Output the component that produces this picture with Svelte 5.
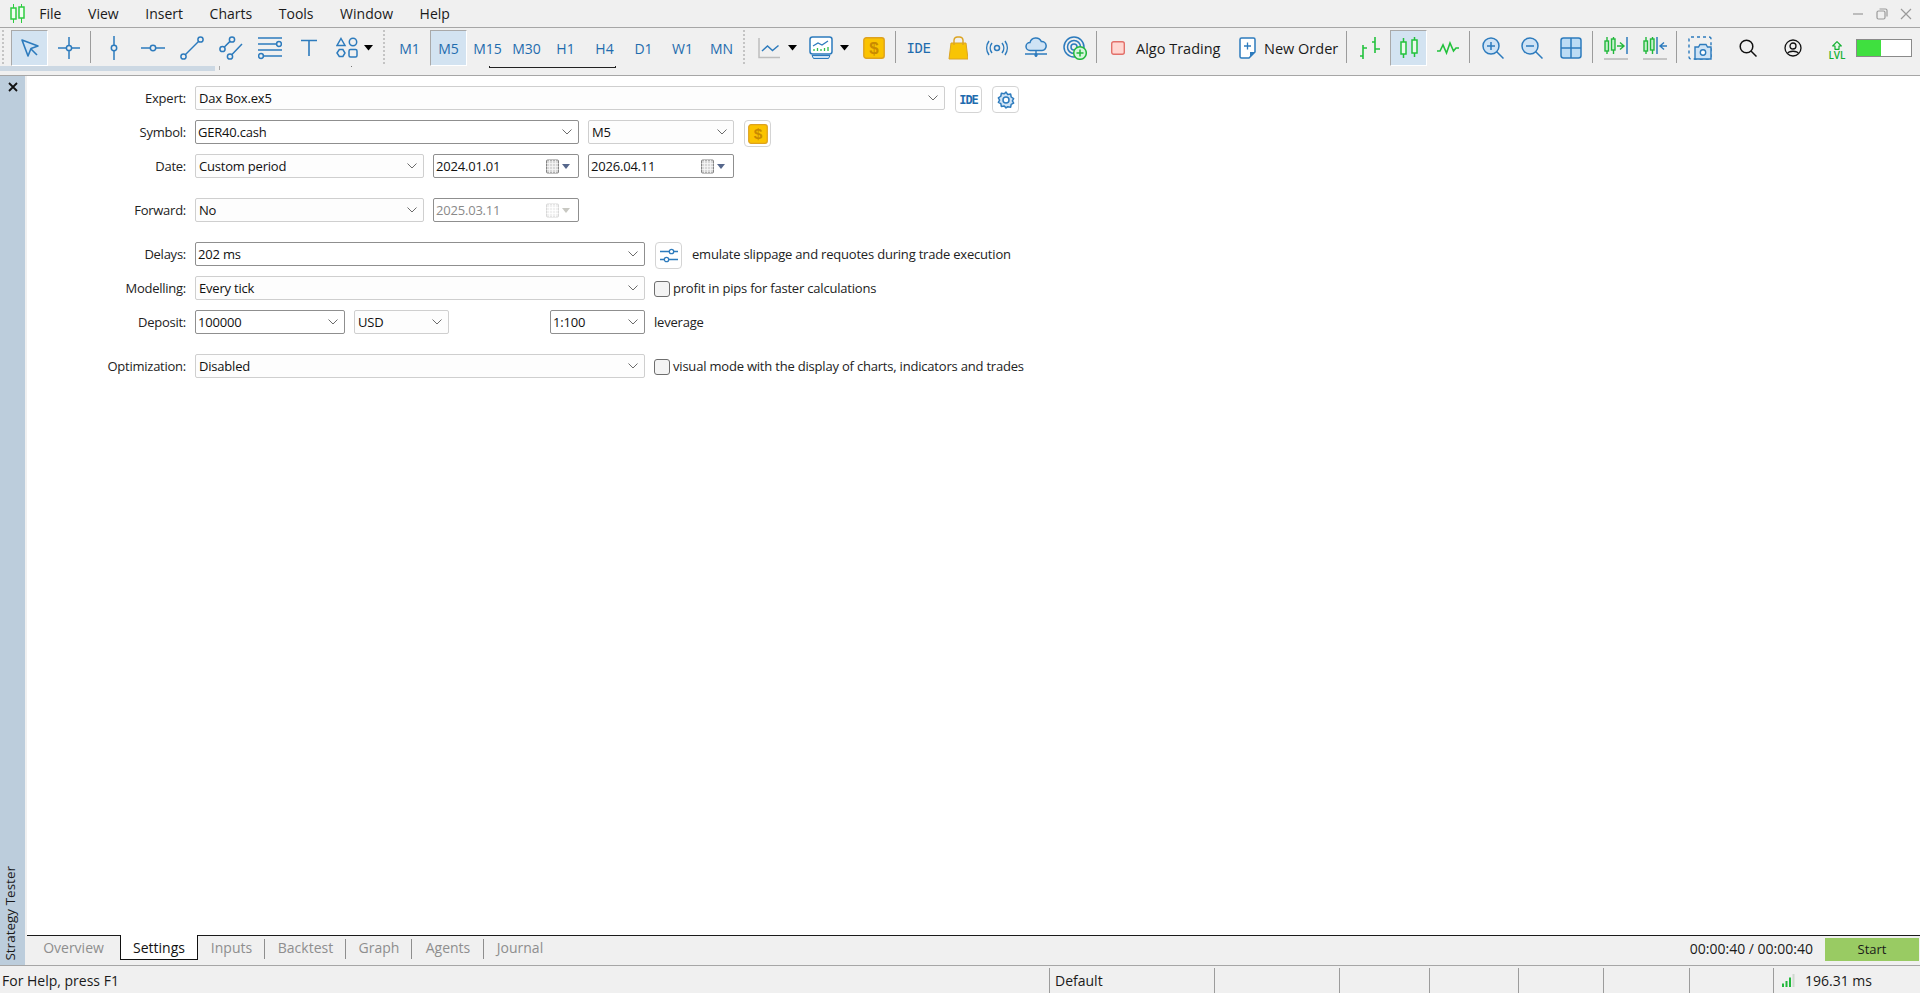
<script>
  const menus = ['File', 'View', 'Insert', 'Charts', 'Tools', 'Window', 'Help'];
  const periods = ['M1', 'M5', 'M15', 'M30', 'H1', 'H4', 'D1', 'W1', 'MN'];
  const tabs = [
    { name: 'Inputs', w: 67 },
    { name: 'Backtest', w: 81 },
    { name: 'Graph', w: 66 },
    { name: 'Agents', w: 72 },
    { name: 'Journal', w: 72 }
  ];
  const statusCells = [165, 125, 90, 89, 85, 86, 84];
</script>

{#snippet chevron()}
  <svg class="chev" width="12" height="8" viewBox="0 0 12 8"><path d="M1.5 1.5 6 6l4.5-4.5" fill="none" stroke="#6b6b6b" stroke-width="1"/></svg>
{/snippet}

{#snippet select(cls, text, strong)}
  <div class="sel {cls}" class:strong={strong}><span>{text}</span>{@render chevron()}</div>
{/snippet}

{#snippet calendar(off)}
  <svg class="cal" width="30" height="17" viewBox="0 0 30 17">
    <rect x="1.5" y="2" width="12" height="13" rx="1" fill={off ? '#f0f0f0' : '#d8d8d8'} stroke={off ? '#d8d8d8' : '#858585'}/>
    <path d="M4.5 2v13M7.5 2v13M10.5 2v13M1.5 5.5h12M1.5 8.5h12M1.5 11.5h12" stroke={off ? '#fff' : '#f8f8f8'} stroke-width=".8"/>
    <path d="M17 6h8l-4 5z" fill={off ? '#c8c8c2' : '#56678c'}/>
  </svg>
{/snippet}

{#snippet caret()}
  <svg class="caret" width="10" height="6" viewBox="0 0 10 6"><path d="M0 0h9L4.5 5.5z" fill="#000"/></svg>
{/snippet}

{#snippet dollar(size)}
  <svg width={size} height={size} viewBox="0 0 22 22">
    <rect x=".8" y=".8" width="20.400" height="20.400" rx="2.500" fill="#fbc300" stroke="#dea21e" stroke-width="1.400"/>
    <text x="11" y="17" text-anchor="middle" class="dollar">$</text>
  </svg>
{/snippet}

<div class="app">
  <header class="menubar">
    <svg class="logo" width="15" height="19" viewBox="0 0 15 19">
      <path d="M3.500 0v19M11.500 0v19" stroke="#2ecc40" stroke-width="1"/>
      <rect x="1" y="4" width="5" height="11" fill="#f0fff0" stroke="#2ecc40" stroke-width="1.500"/>
      <rect x="9" y="3" width="5" height="11" fill="#f0fff0" stroke="#2ecc40" stroke-width="1.500"/>
    </svg>
    <nav class="menus">
      {#each menus as m}<span>{m}</span>{/each}
    </nav>
    <div class="winctl">
      <svg width="12" height="12" viewBox="0 0 12 12"><path d="M1 6h10" stroke="#9a9a9a" stroke-width="1.2"/></svg>
      <svg width="12" height="12" viewBox="0 0 12 12"><rect x="1" y="3" width="8" height="8" rx="1.5" fill="none" stroke="#9a9a9a" stroke-width="1.2"/><path d="M3.5 1h6a1.5 1.5 0 0 1 1.5 1.5v6" fill="none" stroke="#9a9a9a" stroke-width="1.2"/></svg>
      <svg width="12" height="12" viewBox="0 0 12 12"><path d="M1 1l10 10M11 1 1 11" stroke="#9a9a9a" stroke-width="1.2"/></svg>
    </div>
  </header>

  <div class="toolbar">
    <div class="grip first"></div>
    <div class="tb on">
      <svg width="20" height="20" viewBox="0 0 20 20"><path d="M2 2l16 6-7 2.5L8 18z" fill="#cfe3f5" stroke="#2d7bbd" stroke-width="1.6" stroke-linejoin="round"/><path d="M11 11l6 6" stroke="#2d7bbd" stroke-width="1.6"/></svg>
    </div>
    <div class="tb">
      <svg width="22" height="22" viewBox="0 0 22 22"><g fill="none" stroke="#2d7bbd" stroke-width="1.5"><path d="M0 11h8M14 11h8M11 0v8M11 14v8"/><circle cx="11" cy="11" r="2.6"/></g></svg>
    </div>
    <div class="sep"></div>
    <div class="tb">
      <svg width="8" height="24" viewBox="0 0 8 24"><g fill="none" stroke="#2d7bbd" stroke-width="1.5"><path d="M4 0v9M4 15v9"/><circle cx="4" cy="12" r="2.7"/></g></svg>
    </div>
    <div class="tb">
      <svg width="24" height="8" viewBox="0 0 24 8"><g fill="none" stroke="#2d7bbd" stroke-width="1.5"><path d="M0 4h9M15 4h9"/><circle cx="12" cy="4" r="2.7"/></g></svg>
    </div>
    <div class="tb">
      <svg width="24" height="24" viewBox="0 0 24 24"><g fill="none" stroke="#2d7bbd" stroke-width="1.5"><circle cx="3.5" cy="20.5" r="2.6"/><circle cx="20.5" cy="3.5" r="2.6"/><path d="M5.5 18.5l13-13"/></g></svg>
    </div>
    <div class="tb">
      <svg width="24" height="24" viewBox="0 0 24 24"><g fill="none" stroke="#2d7bbd" stroke-width="1.5"><circle cx="3.5" cy="13" r="2.6"/><circle cx="13" cy="3.5" r="2.6"/><circle cx="11" cy="20.5" r="2.6"/><path d="M5.4 11 11 5.4M13 18.5 23 8"/></g></svg>
    </div>
    <div class="tb">
      <svg width="24" height="24" viewBox="0 0 24 24"><g fill="none" stroke="#2d7bbd" stroke-width="1.5"><path d="M0 2h24M0 8h18M0 14h24M6 20h18"/><circle cx="21" cy="8" r="2.4" fill="#f0f0f0"/><circle cx="3" cy="20" r="2.4"/></g></svg>
    </div>
    <div class="tb">
      <svg width="18" height="18" viewBox="0 0 18 18"><path d="M1 1.5h16M9 1.5V17" fill="none" stroke="#2d7bbd" stroke-width="1.6"/></svg>
    </div>
    <div class="tb wide53">
      <svg class="shapes" width="22" height="22" viewBox="0 0 22 22"><g fill="none" stroke="#2d7bbd" stroke-width="1.5"><path d="M5 1.5l4 7H1z"/><circle cx="17" cy="5" r="3.7"/><path d="M1 16l2.3-3.5h3.6L9 16l-2.1 3.5H3.3z"/><rect x="13" y="12.5" width="8" height="7.5" rx="1.5"/></g></svg>
      {@render caret()}
    </div>
    <div class="grip"></div>
    {#each periods as p}
      <div class="tb period" class:on={p === 'M5'}><span>{p}</span></div>
    {/each}
    <div class="grip g2"></div>
    <div class="tb wide52">
      <svg width="22" height="22" viewBox="0 0 22 22"><path d="M1 1v19.5h21" fill="none" stroke="#bdbdbd" stroke-width="1.5"/><path d="M4 14l5.5-5 5 4.5 6-5" fill="none" stroke="#2d7bbd" stroke-width="1.5"/></svg>
      {@render caret()}
    </div>
    <div class="tb wide53b">
      <svg width="24" height="24" viewBox="0 0 24 24"><rect x="1" y="1" width="22" height="17" rx="2.5" fill="#fff" stroke="#2d7bbd" stroke-width="1.5"/><path d="M4 10l5-3 4 2 6-4" fill="none" stroke="#2d7bbd" stroke-width="1.3"/><path d="M5 15v-2M8.5 15v-3M12 15v-2M15.5 15v-3M19 15v-4" stroke="#2fbf4a" stroke-width="1.3"/><path d="M3 19.5l1.5 3h15l1.5-3z" fill="#cfe3f5" stroke="#2d7bbd"/></svg>
      {@render caret()}
    </div>
    <div class="tb">{@render dollar(22)}</div>
    <div class="sep"></div>
    <div class="tb ide">IDE</div>
    <div class="tb">
      <svg width="20" height="24" viewBox="0 0 20 24"><path d="M3 7h15l2 16H1z" fill="#f8c404" stroke="#dca422"/><path d="M6 9V4a3.5 3.5 0 0 1 3.5-3h2A3.5 3.5 0 0 1 15 4v5" fill="none" stroke="#dca422" stroke-width="1.4"/></svg>
    </div>
    <div class="tb">
      <svg width="22" height="16" viewBox="0 0 22 16"><g fill="none" stroke="#2d7bbd" stroke-width="1.5"><circle cx="11" cy="8" r="2.5"/><path d="M6 3a8 8 0 0 0 0 10M16 3a8 8 0 0 1 0 10M3 1a12 12 0 0 0 0 14M19 1a12 12 0 0 1 0 14"/></g></svg>
    </div>
    <div class="tb">
      <svg width="22" height="22" viewBox="0 0 22 22"><path d="M5 13.5a4 4 0 0 1 0-8 6 6 0 0 1 11.3-1A4.5 4.5 0 0 1 17 13.5z" fill="#cfe3f5" stroke="#2d7bbd" stroke-width="1.5"/><path d="M0 17h22M11 14v6" stroke="#2d7bbd" stroke-width="1.4"/><circle cx="11" cy="18" r="1.7" fill="#2d7bbd"/></svg>
    </div>
    <div class="tb">
      <svg width="24" height="24" viewBox="0 0 24 24"><g fill="none" stroke="#2d7bbd" stroke-width="1.5"><circle cx="11" cy="11" r="10"/><circle cx="11" cy="11" r="6.5"/><circle cx="11" cy="11" r="3"/></g><circle cx="17" cy="17" r="6.3" fill="#d8f5dd" stroke="#22b83c" stroke-width="1.5"/><path d="M13.5 17h7M17 13.5v7" stroke="#22b83c" stroke-width="1.5"/></svg>
    </div>
    <div class="sep"></div>
    <div class="tb textbtn algo">
      <svg width="14" height="14" viewBox="0 0 14 14"><rect x=".7" y=".7" width="12.6" height="12.6" rx="2" fill="#ffd7d2" stroke="#e2706a" stroke-width="1.4"/></svg>
      <span>Algo Trading</span>
    </div>
    <div class="tb textbtn order">
      <svg width="17" height="22" viewBox="0 0 17 22"><path d="M2.5 1h12A1.5 1.5 0 0 1 16 2.500V15l-6 6H2.500A1.500 1.500 0 0 1 1 19.500v-17A1.500 1.500 0 0 1 2.500 1z" fill="#fff" stroke="#2d7bbd" stroke-width="1.5"/><path d="M16 15h-5v5z" fill="#2d7bbd"/><path d="M5 9h7M8.500 5.500v7" stroke="#2d7bbd" stroke-width="1.3"/></svg>
      <span>New Order</span>
    </div>
    <div class="sep"></div>
    <div class="tb">
      <svg width="22" height="22" viewBox="0 0 22 22"><path d="M4 8v14M4 11h4M1 19h3M16 0v16M16 5h-3M16 12h5" fill="none" stroke="#22c23c" stroke-width="1.6"/></svg>
    </div>
    <div class="tb on">
      <svg width="18" height="22" viewBox="0 0 18 22"><g fill="#eaf9ec" stroke="#22c23c" stroke-width="1.5"><path d="M3.500 1v20M14.500 0v20"/><rect x="1" y="5" width="5" height="12"/><rect x="12" y="3" width="5" height="13"/></g></svg>
    </div>
    <div class="tb">
      <svg width="22" height="14" viewBox="0 0 22 14"><path d="M0 10h3l3-6 3.500 8L13 2l3.500 8 2.500-3h3" fill="none" stroke="#22c23c" stroke-width="1.6"/></svg>
    </div>
    <div class="sep"></div>
    <div class="tb">
      <svg width="22" height="22" viewBox="0 0 22 22"><circle cx="9" cy="9" r="8" fill="#cfe3f5" stroke="#2d7bbd" stroke-width="1.500"/><path d="M14.500 14.500l7 7M5 9h8M9 5v8" stroke="#2d7bbd" stroke-width="1.500"/></svg>
    </div>
    <div class="tb">
      <svg width="22" height="22" viewBox="0 0 22 22"><circle cx="9" cy="9" r="8" fill="#cfe3f5" stroke="#2d7bbd" stroke-width="1.500"/><path d="M14.500 14.500l7 7M5 9h8" stroke="#2d7bbd" stroke-width="1.500"/></svg>
    </div>
    <div class="tb">
      <svg width="22" height="22" viewBox="0 0 22 22"><rect x="1" y="1" width="20" height="20" rx="2.500" fill="#bcdcf5" stroke="#2d7bbd" stroke-width="1.500"/><path d="M11 1v20M1 11h20" stroke="#2d7bbd" stroke-width="1.500"/></svg>
    </div>
    <div class="sep"></div>
    <div class="tb">
      <svg width="24" height="24" viewBox="0 0 24 24"><g fill="#c7efcd" stroke="#22b83c" stroke-width="1.400"><path d="M3 1v17M9.500 1v17"/><rect x="1" y="5" width="3.500" height="10"/><rect x="7.500" y="3" width="3.500" height="11"/></g><path d="M13 10h7M16 6.500l4 3.500-4 3.500" fill="none" stroke="#22b83c" stroke-width="1.400"/><path d="M23 1v17" stroke="#2d7bbd" stroke-width="1.500"/><path d="M0 23h24" stroke="#a8a8a8" stroke-width="1.200"/></svg>
    </div>
    <div class="tb">
      <svg width="24" height="24" viewBox="0 0 24 24"><g fill="#c7efcd" stroke="#22b83c" stroke-width="1.400"><path d="M3 1v17M9.500 1v17"/><rect x="1" y="5" width="3.500" height="10"/><rect x="7.500" y="3" width="3.500" height="11"/></g><path d="M14 1v17" stroke="#2d7bbd" stroke-width="1.500"/><path d="M24 10h-7M21 6.500 17 10l4 3.500" fill="none" stroke="#2d7bbd" stroke-width="1.400"/><path d="M0 23h24" stroke="#a8a8a8" stroke-width="1.200"/></svg>
    </div>
    <div class="sep"></div>
    <div class="tb">
      <svg width="24" height="24" viewBox="0 0 24 24"><rect x="1" y="1" width="22" height="22" rx="2" fill="none" stroke="#2d7bbd" stroke-width="1.400" stroke-dasharray="3 3"/><path d="M8 11h2.500l1.500-2.500h6l1.500 2.500H23v12H7V11z" fill="#cfe3f5" stroke="#2d7bbd" stroke-width="1.400"/><circle cx="15" cy="16.500" r="2.700" fill="#fff" stroke="#2d7bbd" stroke-width="1.400"/></svg>
    </div>
    <div class="tb t45 firstright">
      <svg width="18" height="18" viewBox="0 0 18 18"><circle cx="7.500" cy="7.500" r="6.300" fill="none" stroke="#111" stroke-width="1.500"/><path d="M12 12l5.500 5.500" stroke="#111" stroke-width="1.500"/></svg>
    </div>
    <div class="tb t45">
      <svg width="18" height="18" viewBox="0 0 18 18"><circle cx="9" cy="9" r="8" fill="none" stroke="#111" stroke-width="1.300"/><circle cx="9" cy="7" r="3" fill="none" stroke="#111" stroke-width="1.300"/><path d="M3.500 14.500C5 11.500 13 11.500 14.500 14.500" fill="none" stroke="#111" stroke-width="1.300"/></svg>
    </div>
    <div class="tb lvl">
      <svg width="10" height="9" viewBox="0 0 10 9"><path d="M5 .7 9.300 5H7v3.300H3V5H.7z" fill="#e7f8ea" stroke="#14b032" stroke-width="1.200" stroke-linejoin="round"/></svg>
      <span>LVL</span>
    </div>
    <div class="battery"><div class="fill"></div></div>

    <div class="strip"></div>
    <div class="tick"></div>
    <div class="dot"></div>
    <div class="bracket"></div>
  </div>

  <div class="middle">
    <aside class="side">
      <svg class="close" width="10" height="10" viewBox="0 0 10 10"><path d="M1 1l8 8M9 1 1 9" stroke="#111" stroke-width="1.800"/></svg>
      <span class="vert">Strategy Tester</span>
    </aside>

    <main class="pane">
      <section class="form">
        <div class="row r-expert">
          <label>Expert:</label>
          {@render select('w750 tall', 'Dax Box.ex5')}
          <div class="ibtn first"><span class="ide small">IDE</span></div>
          <div class="ibtn">
            <svg width="18" height="18" viewBox="0 0 24 24"><path d="M12 1.500l2.300 3.200 3.900-.6.700 3.900 3.300 2.200-1.700 3 1.700 3-3.300 1.600-.7 3.800-3.900-.6L12 22.500l-2.300-2.500-3.900.6-.7-3.800L1.800 15.200l1.700-3-1.700-3L5.100 7l.7-3.900 3.900.6z" fill="#cfe3f5" stroke="#2d7bbd" stroke-width="2" stroke-linejoin="round"/><circle cx="12" cy="12" r="4" fill="#fff" stroke="#2d7bbd" stroke-width="2"/></svg>
          </div>
        </div>
        <div class="row r-symbol">
          <label>Symbol:</label>
          {@render select('w384 edit', 'GER40.cash', true)}
          {@render select('w146', 'M5')}
          <div class="ibtn first">{@render dollar(20)}</div>
        </div>
        <div class="row r-date">
          <label>Date:</label>
          {@render select('w229', 'Custom period')}
          <div class="date"><span>2024.01.01</span>{@render calendar(false)}</div>
          <div class="date"><span>2026.04.11</span>{@render calendar(false)}</div>
        </div>
        <div class="row r-forward">
          <label>Forward:</label>
          {@render select('w229', 'No')}
          <div class="date off"><span>2025.03.11</span>{@render calendar(true)}</div>
        </div>
        <div class="row r-delays">
          <label>Delays:</label>
          {@render select('w450 edit', '202 ms', true)}
          <div class="ibtn first">
            <svg width="18" height="16" viewBox="0 0 18 16"><g fill="none" stroke="#2d7bbd" stroke-width="1.300"><path d="M0 3.500h9M14 3.500h4M0 11.500h4M9 11.500h9"/><circle cx="11.500" cy="3.500" r="2.200"/><circle cx="6.500" cy="11.500" r="2.200"/></g></svg>
          </div>
          <span class="note">emulate slippage and requotes during trade execution</span>
        </div>
        <div class="row r-model">
          <label>Modelling:</label>
          {@render select('w450', 'Every tick')}
          <span class="check"></span>
          <span class="note">profit in pips for faster calculations</span>
        </div>
        <div class="row r-deposit">
          <label>Deposit:</label>
          {@render select('w150 edit', '100000', true)}
          {@render select('w95 strong', 'USD')}
          <div class="spacer"></div>
          {@render select('w95 edit', '1:100', true)}
          <span class="note">leverage</span>
        </div>
        <div class="row r-opt">
          <label>Optimization:</label>
          {@render select('w450', 'Disabled')}
          <span class="check"></span>
          <span class="note">visual mode with the display of charts, indicators and trades</span>
        </div>
      </section>

      <div class="tabs">
        <div class="tab overview">Overview</div>
        <div class="tab active">Settings</div>
        {#each tabs as t, i}
          <div class="tab plain" class:divided={i < tabs.length - 1} style="width:{t.w}px">{t.name}</div>
        {/each}
        <div class="timer">00:00:40 / 00:00:40</div>
        <div class="start">Start</div>
      </div>
    </main>
  </div>

  <footer class="status">
    <div class="help">For Help, press F1</div>
    <div class="cell" style="width:165px">Default</div>
    {#each statusCells.slice(1) as w}
      <div class="cell" style="width:{w}px"></div>
    {/each}
    <div class="cell last">
      <svg width="14" height="13" viewBox="0 0 14 13"><path d="M1 9.500h2V13H1zM4.500 7h2v6h-2zM8 3.500h2V13H8z" fill="#22b83c"/><path d="M11.500 0h2v13h-2z" fill="#cfd8cf"/></svg>
      <span>196.31 ms</span>
    </div>
  </footer>
</div>

<style>
  :global(body) { margin: 0; background: #f0f0f0; }
  .app {
    width: 1920px; height: 993px; overflow: hidden;
    display: flex; flex-direction: column;
    font-family: "Open Sans", "Noto Sans", sans-serif; font-size: 13px; color: #111;
    background: #f0f0f0;
  }

  .menubar { height: 27px; display: flex; align-items: center; flex: none; border-bottom: 1px solid #a6a6a6; }
  .logo { margin-left: 10px; }
  .menus { display: flex; margin-left: 1px; font-size: 14px; color: #1a1a1a; }
  .menus span { padding: 0 13.300px; line-height: 27px; }
  .winctl { margin-left: auto; display: flex; gap: 12px; margin-right: 8px; }

  .toolbar {
    height: 47px; flex: none; position: relative;
    display: flex; align-items: flex-start;
    border-bottom: 1px solid #a6a6a6;
  }
  .grip { width: 9px; height: 36px; margin-top: 2px; flex: none; position: relative; }
  .grip::after {
    content: ""; position: absolute; left: 2px; top: 0; width: 2px; height: 34px;
    background: repeating-linear-gradient(#c4c4c4 0 2px, transparent 2px 4px);
  }
  .grip.first { width: 10px; }
  .grip.g2 { width: 8px; }
  .tb {
    width: 39px; height: 36px; margin-top: 2px; flex: none;
    display: flex; align-items: center; justify-content: center; box-sizing: border-box;
    position: relative;
  }
  .tb.on::before {
    content: ""; position: absolute; inset: 0 1px 0 1px;
    background: #d3e3f1;
    border-left: 1px solid #a9a9a9; border-top: 1px solid #a9a9a9;
    border-right: 1px solid #fff; border-bottom: 1px solid #fff;
  }
  .tb > * { position: relative; }
  .sep { width: 6px; height: 34px; flex: none; margin-top: 3px; position: relative; }
  .sep::after { content: ""; position: absolute; left: 2px; top: 0; width: 1px; height: 32px; background: #9c9c9c; }
  .wide53 { width: 53px; justify-content: flex-start; padding-left: 8px; }
  .shapes { margin-right: 6px; }
  .wide52 { width: 52px; justify-content: flex-start; padding-left: 9px; }
  .wide52 .caret { margin-left: 8px; }
  .wide53b { width: 53px; justify-content: flex-start; padding-left: 8px; }
  .wide53b .caret { margin-left: 7px; }
  .period { font-size: 14px; color: #1f6cae; }
  .ide { font-family: "DejaVu Sans Mono", monospace; font-weight: 400; color: #1f6cae; font-size: 14px; letter-spacing: -.5px; }
  .small { font-size: 12px; font-weight: 700; letter-spacing: -1px; }
  .textbtn { justify-content: flex-start; font-size: 14.500px; color: #1a1a1a; }
  .algo { width: 131px; padding-left: 11px; gap: 11px; }
  .order { width: 113px; padding-left: 8px; gap: 8px; }
  .t45 { width: 45px; }
  .firstright { margin-left: 6px; }
  .lvl { width: 41px; flex-direction: column; gap: 0; font-size: 10px; font-weight: 600; color: #14b032; line-height: 10px; padding: 4px 0 0 3px; }
  .battery {
    width: 54px; height: 16px; margin-top: 11px; flex: none; background: #fff;
    border: 1px solid #8a8a8a;
  }
  .fill { width: 24px; height: 100%; background: #3fe03f; }
  .strip { position: absolute; left: 0; top: 38px; width: 215px; height: 5px; background: #ccd8e3; }
  .tick { position: absolute; left: 219px; top: 38px; width: 1px; height: 4px; background: #aaa; }
  .dot { position: absolute; left: 351px; top: 38px; width: 1px; height: 1px; background: #777; }
  .bracket {
    position: absolute; left: 489px; top: 38px; width: 127px; height: 2px;
    border: 1px solid #222; border-top: 0; box-sizing: border-box;
  }

  .middle { flex: 1; display: flex; min-height: 0; }
  .side {
    width: 25px; background: #bccddc; position: relative; flex: none; margin-right: 2px;
    display: flex; flex-direction: column; align-items: flex-start; justify-content: flex-end;
  }
  .close { position: absolute; left: 8px; top: 6px; }
  .vert {
    writing-mode: vertical-rl; transform: rotate(180deg);
    font-size: 13.500px; color: #1a1a1a; padding-top: 4px; line-height: 20px;
  }
  .pane { flex: 1; display: flex; flex-direction: column; background: #fff; min-width: 0; }

  .form { flex: 1; padding-top: 10px; font-size: 13px; letter-spacing: -.2px; }
  .row { display: flex; align-items: flex-start; height: 24px; }
  .row label { width: 159px; margin-right: 9px; text-align: right; line-height: 24px; color: #222; flex: none; font-size: 13px; letter-spacing: -.25px; }
  .r-symbol { margin-top: 10px; }
  .r-date { margin-top: 10px; }
  .r-forward { margin-top: 20px; }
  .r-delays { margin-top: 20px; }
  .r-model { margin-top: 10px; }
  .r-deposit { margin-top: 10px; }
  .r-opt { margin-top: 20px; }

  .sel, .date {
    height: 24px; box-sizing: border-box; flex: none;
    border: 1px solid #cfcfcf; border-radius: 2px; background: #fdfdfd;
    display: flex; align-items: center; justify-content: space-between;
    padding: 0 5px 0 3px; margin-right: 9px; line-height: 20px;
  }
  .sel.edit, .sel.strong, .date { border-color: #8f8f8f; background: #fff; }
  .sel span { white-space: nowrap; }
  .edit { padding-left: 2px; }
  .w750 { width: 750px; }
  .w384 { width: 384px; }
  .w146 { width: 146px; }
  .w229 { width: 229px; }
  .w450 { width: 450px; }
  .w150 { width: 150px; }
  .w95 { width: 95px; }
  .date { width: 146px; padding: 0 3px 0 2px; }
  .date.off { color: #8a8a8a; }
  .ibtn {
    width: 27px; height: 27px; box-sizing: border-box; flex: none;
    border: 1px solid #d4d4d4; border-radius: 4px; background: #fff;
    display: flex; align-items: center; justify-content: center; margin-right: 10px;
  }
  .ibtn.first { margin-left: 1px; }
  .spacer { width: 92px; flex: none; }
  .note { line-height: 24px; color: #222; white-space: nowrap; }
  .check {
    width: 16px; height: 16px; box-sizing: border-box; flex: none; margin-top: 5px; margin-right: 3px;
    border: 1px solid #6e6e6e; border-radius: 3px; background: #f4f4f4;
  }

  .tabs {
    height: 30px; flex: none; border-top: 1px solid #1a1a1a; background: #f0f0f0; box-sizing: border-box;
    display: flex; align-items: flex-start; font-size: 14px; color: #8e8e8e; position: relative;
  }
  .tab { height: 24px; line-height: 24px; text-align: center; box-sizing: border-box; flex: none; }
  .overview { width: 93px; }
  .active {
    width: 78px; background: #fff; color: #111; margin-top: -1px; height: 25px; line-height: 25px;
    border: 1px solid #111; border-top: 0;
    box-shadow: 0 -1px 0 #fff;
  }
  .plain { position: relative; }
  .divided::after {
    content: ""; position: absolute; right: 0; top: 3px; width: 1px; height: 20px; background: #8e8e8e;
  }
  .timer { margin-left: auto; color: #1a1a1a; font-size: 14px; line-height: 25px; margin-right: 12px; }
  .start {
    width: 94px; height: 23px; margin-top: 2px; margin-right: 1px; background: #99cb63; color: #1a1a1a;
    text-align: center; line-height: 23px; font-size: 13px;
  }

  .status { height: 27px; flex: none; display: flex; border-top: 1px solid #a6a6a6; font-size: 14px; color: #1a1a1a; }
  .help { width: 1049px; flex: none; line-height: 30px; padding-left: 2px; box-sizing: border-box; }
  .cell {
    flex: none; border-left: 1px solid #9c9c9c; box-sizing: border-box; padding-left: 5px;
    line-height: 25px; height: 25px; margin-top: 2px;
  }
  .cell.last { flex: 1; display: flex; align-items: center; gap: 10px; padding-left: 7px; }

  .dollar { font: 700 17px "Liberation Sans", sans-serif; fill: #c98a00; }
</style>
